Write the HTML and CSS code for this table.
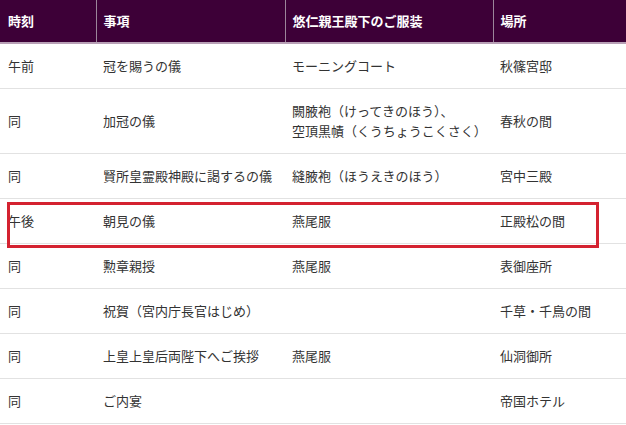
FILE: index.html
```html
<!DOCTYPE html>
<html lang="ja">
<head>
<meta charset="utf-8">
<link rel="stylesheet" href="styles.css">
</head>
<body>
<div class="wrap">
<table class="sched">
  <colgroup>
    <col class="c1"><col class="c2"><col class="c3"><col class="c4">
  </colgroup>
  <thead>
    <tr><th>時刻</th><th>事項</th><th>悠仁親王殿下のご服装</th><th>場所</th></tr>
  </thead>
  <tbody>
    <tr><td>午前</td><td>冠を賜うの儀</td><td>モーニングコート</td><td>秋篠宮邸</td></tr>
    <tr><td>同</td><td>加冠の儀</td><td>闕腋袍（けってきのほう）、<br>空頂黒幘（くうちょうこくさく）</td><td>春秋の間</td></tr>
    <tr><td>同</td><td>賢所皇霊殿神殿に謁するの儀</td><td>縫腋袍（ほうえきのほう）</td><td>宮中三殿</td></tr>
    <tr><td>午後</td><td>朝見の儀</td><td>燕尾服</td><td>正殿松の間</td></tr>
    <tr><td>同</td><td>勲章親授</td><td>燕尾服</td><td>表御座所</td></tr>
    <tr><td>同</td><td>祝賀（宮内庁長官はじめ）</td><td></td><td>千草・千鳥の間</td></tr>
    <tr><td>同</td><td>上皇上皇后両陛下へご挨拶</td><td>燕尾服</td><td>仙洞御所</td></tr>
    <tr><td>同</td><td>ご内宴</td><td></td><td>帝国ホテル</td></tr>
  </tbody>
</table>
<div class="highlight"></div>
</div>
</body>
</html>
```

FILE: styles.css
```css
html, body {
  margin: 0;
  padding: 0;
  background: #fff;
}
body {
  font-family: "Noto Sans CJK JP", "Noto Sans", sans-serif;
  font-size: 13px;
  color: #333;
}
.wrap {
  position: relative;
  width: 626px;
}
.sched {
  width: 626px;
  border-collapse: collapse;
  table-layout: fixed;
}
.c1 { width: 96px; }
.c2 { width: 189px; }
.c3 { width: 208px; }
.c4 { width: 133px; }
.sched th {
  background: #3d0037;
  color: #fff;
  font-weight: bold;
  text-align: left;
  line-height: 20px;
  padding: 11px 7px 11px 7px;
  border-bottom: 2px solid #b8a0b6;
  border-left: 1px solid #9c859a;
}
.sched th:first-child {
  border-left: none;
  padding-left: 8px;
}
.sched td {
  line-height: 20px;
  padding: 12px 7px 12px 7px;
  border-bottom: 1px solid #e2e2e2;
  vertical-align: middle;
  white-space: nowrap;
}
.sched td:first-child {
  padding-left: 8px;
}
.highlight {
  position: absolute;
  left: 7px;
  top: 202px;
  width: 586px;
  height: 40px;
  border: 3px solid #d42230;
}
```
